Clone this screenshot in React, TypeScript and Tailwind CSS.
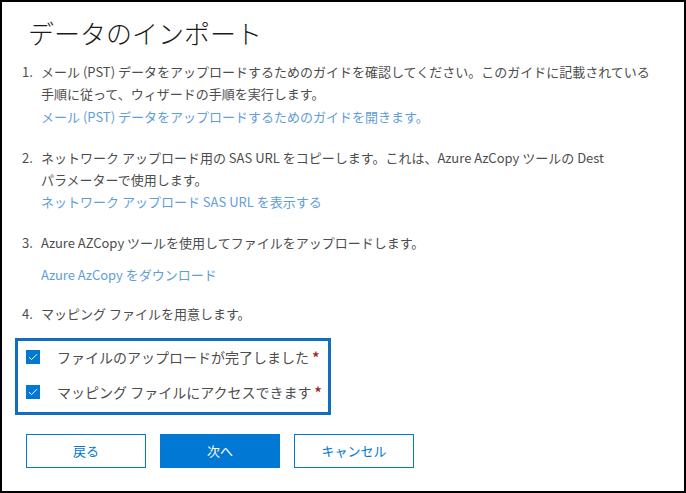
import React from 'react';

const font = { fontFamily: '"Noto Sans CJK JP", "Noto Sans", sans-serif' };

function Check() {
  return (
    <span className="w-[14px] h-[14px] bg-[#0078d4] flex items-center justify-center shrink-0">
      <svg width="10" height="8" viewBox="0 0 10 8" fill="none">
        <path d="M1 4.2 L3.6 6.6 L9 1.2" stroke="white" strokeWidth="1" />
      </svg>
    </span>
  );
}

export default function App() {
  return (
    <div
      className="w-[686px] h-[493px] border-2 border-black bg-white text-[#4d4d4d] overflow-hidden"
      style={font}
    >
      <h1 className="pl-[26px] pt-[15px] text-[26px] leading-[32px] font-light text-[#1b1b1b]">
        データのインポート
      </h1>

      <ol className="pl-[20px] pr-[20px] text-[13px] leading-[22px] mt-[12px]">
        <li className="flex">
          <span className="w-[19px] shrink-0">1.</span>
          <div>
            <p>
              メール (PST) データをアップロードするためのガイドを確認してください。このガイドに記載されている
              <br />
              手順に従って、ウィザードの手順を実行します。
            </p>
            <p className="text-[#5f9ed8] mt-[1px]">メール (PST) データをアップロードするためのガイドを開きます。</p>
          </div>
        </li>
        <li className="flex mt-[19px]">
          <span className="w-[19px] shrink-0">2.</span>
          <div>
            <p>
              ネットワーク アップロード用の SAS URL をコピーします。これは、Azure AzCopy ツールの Dest
              <br />
              パラメーターで使用します。
            </p>
            <p className="text-[#5f9ed8]">ネットワーク アップロード SAS URL を表示する</p>
          </div>
        </li>
        <li className="flex mt-[19px]">
          <span className="w-[19px] shrink-0">3.</span>
          <div>
            <p>Azure AZCopy ツールを使用してファイルをアップロードします。</p>
            <p className="text-[#5f9ed8] mt-[10px]">Azure AzCopy をダウンロード</p>
          </div>
        </li>
        <li className="flex mt-[17px]">
          <span className="w-[19px] shrink-0">4.</span>
          <p>マッピング ファイルを用意します。</p>
        </li>
      </ol>

      <div className="ml-[13px] mt-[13px] w-[316px] h-[77px] border-[3px] border-[#106ebe] pl-[8px] pt-[9px] flex flex-col gap-[21px] text-[14px] leading-[14px]">
        <label className="flex items-center gap-[17px]">
          <Check />
          <span>
            ファイルのアップロードが完了しました <span className="text-[#a4262c] font-bold">*</span>
          </span>
        </label>
        <label className="flex items-center gap-[17px]">
          <Check />
          <span>
            マッピング ファイルにアクセスできます <span className="text-[#a4262c] font-bold">*</span>
          </span>
        </label>
      </div>

      <div className="flex gap-[14px] ml-[24px] mt-[19px] text-[13px]">
        <button className="w-[120px] h-[34px] border border-[#0078d4] text-[#0078d4] bg-white">戻る</button>
        <button className="w-[120px] h-[34px] bg-[#0078d4] text-white">次へ</button>
        <button className="w-[120px] h-[34px] border border-[#0078d4] text-[#0078d4] bg-white">キャンセル</button>
      </div>
    </div>
  );
}
